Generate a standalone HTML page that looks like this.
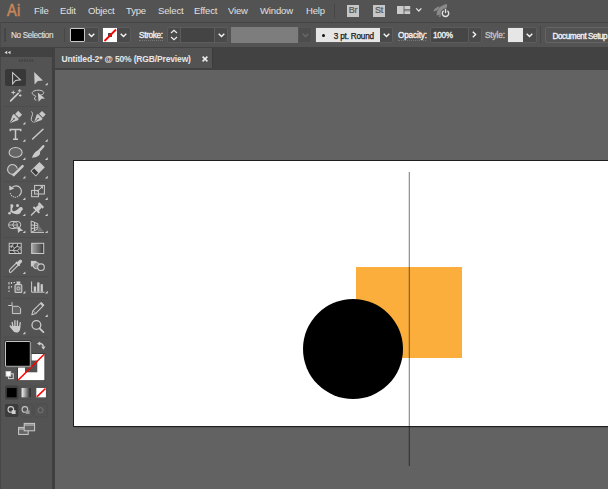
<!DOCTYPE html>
<html><head><meta charset="utf-8">
<style>
*{margin:0;padding:0;box-sizing:border-box}
html,body{width:608px;height:489px;overflow:hidden;background:#626262;font-family:"Liberation Sans",sans-serif;}
body>div,body>svg,.a{position:absolute}
#menubar{left:0;top:0;width:608px;height:22px;background:#535353}
#ctrl{left:0;top:22px;width:608px;height:26px;background:#535353;border-top:1px solid #444;border-bottom:1px solid #424242;border-left:1px solid #4a4a4a}
#tabbar{left:53px;top:48px;width:555px;height:22px;background:#424242}
#tab{left:55px;top:48px;width:157px;height:20px;background:#535353}
#tools{left:0;top:48px;width:53px;height:441px;background:#535353;border-left:1px solid #474747}
#toolshead{left:0;top:48px;width:53px;height:9px;background:#424242}
#gutter{left:52px;top:48px;width:3px;height:441px;background:#3f3f3f}
#canvas{left:55px;top:70px;width:553px;height:419px;background:#626262}
#artboard{left:73px;top:160px;width:540px;height:267px;background:#fff;border:1px solid #1e1e1e;box-shadow:1px 1px 0 rgba(0,0,0,0.12)}
.m{top:5px;font-size:9.5px;line-height:12px;color:#e0e0e0;letter-spacing:-0.15px;white-space:nowrap}
.c{top:30px;font-size:8.2px;line-height:12px;color:#f0f0f0;letter-spacing:-0.3px;white-space:nowrap;-webkit-text-stroke:0.35px #f0f0f0}
.u{border-bottom:1px dotted #aaa}
.box{border:1px solid #5c5c5c;border-radius:2px;background:#4a4a4a}
.sep{width:1px;background:#474747}
</style></head><body>
<div id="menubar"></div>
<div id="ctrl"></div>
<div id="tools"></div>
<div id="toolshead"></div>
<div id="gutter"></div>
<div id="tabbar"></div>
<div id="tab"></div>
<div style="left:212px;top:48px;width:1px;height:20px;background:#3c3c3c"></div>
<div id="canvas"></div>
<div id="artboard"></div>
<div style="left:356px;top:267px;width:106px;height:91px;background:#fbae3b"></div>
<div style="left:303px;top:299px;width:100px;height:100px;border-radius:50%;background:#000"></div>
<div style="left:408px;top:172px;width:1px;height:294px;background:rgba(0,0,0,0.12)"></div><div style="left:409px;top:172px;width:1px;height:294px;background:rgba(0,0,0,0.42)"></div>

<!-- menu -->
<div style="left:6.5px;top:-0.5px;font-size:16.5px;line-height:20px;color:#c98658;letter-spacing:0.4px;-webkit-text-stroke:0.55px #c98658;transform:scaleX(0.88);transform-origin:0 0">Ai</div>
<div class="m" style="left:34px">File</div>
<div class="m" style="left:60px">Edit</div>
<div class="m" style="left:88px">Object</div>
<div class="m" style="left:126px">Type</div>
<div class="m" style="left:158px">Select</div>
<div class="m" style="left:194px">Effect</div>
<div class="m" style="left:228px">View</div>
<div class="m" style="left:260px">Window</div>
<div class="m" style="left:306px">Help</div>
<div class="sep" style="left:334px;top:4px;height:14px;background:#464646"></div>
<div style="left:347px;top:5px;width:12px;height:12px;background:#c6c6c6"></div>
<div style="left:348.8px;top:4.5px;font-size:9px;line-height:11px;color:#555;letter-spacing:-0.2px;-webkit-text-stroke:0.2px #555">Br</div>
<div style="left:373px;top:5px;width:12px;height:12px;background:#c6c6c6"></div>
<div style="left:375px;top:4.5px;font-size:9px;line-height:11px;color:#555;letter-spacing:-0.2px;-webkit-text-stroke:0.2px #555">St</div>
<svg style="left:390px;top:0" width="66" height="22">
<rect x="7" y="6" width="6.6" height="8" fill="#cbcbcb"/>
<rect x="14.4" y="6" width="5.8" height="3.2" fill="#cbcbcb"/>
<rect x="14.4" y="9.6" width="5.8" height="1.3" fill="#9a9a9a"/>
<rect x="14.4" y="11.2" width="5.8" height="2.8" fill="#cbcbcb"/>
<path d="M26.2 8.4 L28.8 11 L31.4 8.4" fill="none" stroke="#e0e0e0" stroke-width="1.3"/>
<path d="M46.6 15.4 C46.2 10 50.5 5 57 4 C57.6 10 52.6 14.6 46.6 15.4 Z" fill="#8a8a8a"/>
<path d="M43.4 11.6 C43.8 9 46.4 6.8 49.6 6.4 C49.2 9 46.8 11 43.4 11.6 Z" fill="#8a8a8a"/>
<path d="M49.6 17 L50.6 13.4" stroke="#8a8a8a" stroke-width="1.3"/>
<circle cx="55.5" cy="13.4" r="4.9" fill="#535353"/>
<path d="M53.6 10.8 A3.2 3.2 0 1 0 57.4 10.8" fill="none" stroke="#e2e2e2" stroke-width="1.4"/>
<path d="M55.5 9 V13.2" stroke="#e2e2e2" stroke-width="1.3"/>
</svg>
<!-- control bar -->
<div style="left:4px;top:28px;width:2px;height:14px;background:repeating-linear-gradient(#424242 0 1px,#4a4a4a 1px 2px)"></div>
<div class="c" style="left:11px;top:29.5px;letter-spacing:-0.35px;color:#e2e2e2;-webkit-text-stroke:0.1px #e2e2e2">No Selection</div>
<div class="sep" style="left:64px;top:28px;height:14px"></div>
<div class="box" style="left:69px;top:27px;width:30px;height:16px"></div>
<div style="left:70px;top:28px;width:15px;height:14px;border:1px solid #c8c8c8;border-radius:1px;background:#000"></div>
<svg style="left:88px;top:33px" width="7" height="5"><path d="M0.7 0.8 L3.5 3.6 L6.3 0.8" fill="none" stroke="#f2f2f2" stroke-width="1.4"/></svg>
<div class="box" style="left:102px;top:27px;width:29px;height:16px"></div>
<div style="left:103px;top:28px;width:14px;height:14px;background:#fff"></div>
<div style="left:108px;top:33px;width:4px;height:4px;background:#4a4a4a"></div>
<svg style="left:103px;top:28px" width="14" height="14"><path d="M1.5 13 L13 1.5" stroke="#ff0000" stroke-width="1.8"/></svg>
<svg style="left:120px;top:33px" width="7" height="5"><path d="M0.7 0.8 L3.5 3.6 L6.3 0.8" fill="none" stroke="#f2f2f2" stroke-width="1.4"/></svg>
<div class="c" style="left:139px">Stroke:</div>
<div style="left:139px;top:40px;width:24px;height:1px;border-top:1px dotted #777"></div>
<div class="box" style="left:167px;top:27px;width:61px;height:16px"></div>
<div style="left:180px;top:28px;width:1px;height:14px;background:#5c5c5c"></div>
<div style="left:181px;top:28px;width:33px;height:14px;background:#444"></div>
<div style="left:214px;top:28px;width:1px;height:14px;background:#5c5c5c"></div>
<svg style="left:170px;top:29px" width="8" height="12"><path d="M1 4 L4 1.2 L7 4 M1 8 L4 10.8 L7 8" fill="none" stroke="#eee" stroke-width="1.2"/></svg>
<svg style="left:218px;top:33px" width="7" height="5"><path d="M0.7 0.8 L3.5 3.6 L6.3 0.8" fill="none" stroke="#f2f2f2" stroke-width="1.4"/></svg>
<div style="left:231px;top:27px;width:67px;height:16px;background:#7d7d7d"></div>
<div class="box" style="left:298px;top:27px;width:14px;height:16px;background:#4d4d4d;border-color:#555"></div>
<svg style="left:302px;top:33px" width="7" height="5"><path d="M0.7 0.8 L3.5 3.6 L6.3 0.8" fill="none" stroke="#6a6a6a" stroke-width="1.3"/></svg>
<div class="box" style="left:315px;top:27px;width:78px;height:16px"></div>
<div style="left:316px;top:28px;width:64px;height:14px;background:#e6e6e6"></div>
<div style="left:322px;top:33.5px;width:3px;height:3px;border-radius:50%;background:#111"></div>
<div class="c" style="left:333.8px;top:30.5px;color:#1a1a1a;letter-spacing:-0.2px;-webkit-text-stroke:0.25px #1a1a1a">3 pt. Round</div>
<svg style="left:383px;top:33px" width="7" height="5"><path d="M0.7 0.8 L3.5 3.6 L6.3 0.8" fill="none" stroke="#f2f2f2" stroke-width="1.4"/></svg>
<div class="c" style="left:398px;letter-spacing:-0.15px">Opacity:</div>
<div style="left:398px;top:40px;width:28px;height:1px;border-top:1px dotted #777"></div>
<div class="box" style="left:430px;top:27px;width:39px;height:16px;background:#464646"></div>
<div class="c" style="left:433px">100%</div>
<div class="box" style="left:468px;top:27px;width:14px;height:16px"></div>
<svg style="left:472px;top:31px" width="5" height="8"><path d="M0.8 0.7 L3.6 3.5 L0.8 6.3" fill="none" stroke="#f2f2f2" stroke-width="1.4"/></svg>
<div class="c" style="left:485px;color:#c8c8c8;letter-spacing:-0.1px;-webkit-text-stroke:0.3px #c8c8c8">Style:</div>
<div class="box" style="left:507px;top:27px;width:30px;height:16px"></div>
<div style="left:508px;top:28px;width:15px;height:14px;background:#e6e6e6"></div>
<svg style="left:526px;top:33px" width="7" height="5"><path d="M0.7 0.8 L3.5 3.6 L6.3 0.8" fill="none" stroke="#f2f2f2" stroke-width="1.4"/></svg>
<div class="sep" style="left:540px;top:26px;height:18px"></div>
<div class="box" style="left:545px;top:27px;width:80px;height:16px;background:#535353;border-color:#646464"></div>
<div class="c" style="left:552.5px;top:30.5px;color:#f2f2f2;letter-spacing:-0.45px">Document Setup</div>

<!-- tools -->
<svg style="left:0;top:0" width="53" height="489" viewBox="0 0 53 489">
<defs>
<linearGradient id="gr1" x1="0" x2="1" y1="0" y2="0"><stop offset="0" stop-color="#a8a8a8"/><stop offset="1" stop-color="#3a3a3a"/></linearGradient>
<linearGradient id="gr2" x1="0" x2="1" y1="0" y2="0"><stop offset="0" stop-color="#f4f4f4"/><stop offset="1" stop-color="#222"/></linearGradient>
<g id="tri"><path d="M0.2 2.9 L2.9 0.2 L2.9 2.9 Z" fill="#d0d0d0"/></g>
<g id="nib">
<path d="M0 7.8 L-4 -0.5 L-3.6 -2.2 L3.6 -2.2 L4 -0.5 Z" fill="#c8c8c8"/>
<path d="M0 7.2 L0 1.8" stroke="#535353" stroke-width="0.9"/>
<circle cx="0" cy="1.3" r="0.9" fill="#535353"/>
<rect x="-2.9" y="-7.8" width="5.8" height="4.6" fill="#c8c8c8"/>
</g>
</defs>
<!-- header arrows -->
<path d="M4.5 52.5 L7.2 50.7 L7.2 54.3 Z M7.8 52.5 L10.5 50.7 L10.5 54.3 Z" fill="#d8d8d8"/>
<path d="M19 60.5 H34" stroke="#444" stroke-width="2.5" stroke-dasharray="1.6 0.9"/>
<!-- row1 -->
<rect x="5" y="69" width="21" height="17" rx="2" fill="#383838"/>
<path d="M12.6 72.6 L20.4 79.8 L15.6 80.4 L12.6 83.8 Z" fill="none" stroke="#cacaca" stroke-width="1.05" stroke-linejoin="miter"/>
<path d="M34.2 72 L42.9 80.5 L37.8 81 L34.6 84.6 Z" fill="#cacaca"/>
<use href="#tri" x="44.8" y="82.3"/>
<!-- row2 wand -->
<path d="M10.6 100.8 L18.2 93.4" stroke="#cacaca" stroke-width="1.7" stroke-linecap="round"/>
<path d="M13.3 90.6 V94.4 M11.4 92.5 H15.2 M19.7 89 V92.6 M17.9 90.8 H21.5 M20.2 94.2 V96.8 M18.9 95.5 H21.5" stroke="#cacaca" stroke-width="1"/>
<!-- lasso -->
<path d="M40.5 95 C44.5 94.5 45 91.5 41 90.5 C37 89.6 32 90.8 32.2 93.3 C32.4 95 35 95.3 35.6 96 C36.2 97 34 97.5 34.5 99 C35 100.3 36.5 100 36.5 100" fill="none" stroke="#cacaca" stroke-width="1"/>
<path d="M37.8 92.4 L45 98.6 L41.6 98.8 L38.6 101.8 Z" fill="#cacaca"/>
<!-- sep -->
<path d="M3 106.5 H49" stroke="#4d4d4d" stroke-width="1"/>
<!-- row3 pen -->
<use href="#nib" transform="translate(14.9 118) rotate(45) scale(0.95)"/>
<use href="#tri" x="22.5" y="121.5"/>
<use href="#nib" transform="translate(38.9 117.7) rotate(45) scale(0.9)"/>
<path d="M31.3 111.6 C33.5 112.9 32.2 115.4 31.4 117.9 C30.8 120 32 121.8 33.5 122.2" fill="none" stroke="#cacaca" stroke-width="1"/>
<!-- row4 T / line -->
<path d="M10.3 131.2 V129.4 H20.7 V131.2 M15.5 129.4 V139 M13 139.2 H18" fill="none" stroke="#cacaca" stroke-width="1.5"/>
<use href="#tri" x="22.5" y="138.8"/>
<path d="M32.6 139 L43 129.3" stroke="#cacaca" stroke-width="1.5" stroke-linecap="round"/>
<use href="#tri" x="44.8" y="138.8"/>
<!-- row5 ellipse / brush -->
<ellipse cx="15.6" cy="152.4" rx="6.5" ry="4.9" fill="#666" stroke="#cacaca" stroke-width="1.1"/>
<use href="#tri" x="22.5" y="157"/>
<path d="M43.3 146.2 L38.5 151.6" stroke="#cacaca" stroke-width="2.4" stroke-linecap="round"/>
<path d="M38.6 150.2 C40.5 151.5 40.8 153.8 38.8 155.6 C37 157.2 34 157.8 31.8 157.8 C32.5 156 33.5 153.8 35.2 152.2 C36.2 151.2 37.5 150.4 38.6 150.2 Z" fill="#cacaca"/>
<use href="#tri" x="44.8" y="157"/>
<!-- row6 shaper / eraser -->
<path d="M15.5 173.3 A4.9 4.9 0 1 1 17.3 168.6" fill="#666" stroke="#cacaca" stroke-width="1.1"/>
<path d="M13.6 175.2 L22.6 166.2" stroke="#cacaca" stroke-width="2.5" stroke-linecap="round"/>
<use href="#tri" x="22.5" y="175.6"/>
<g transform="translate(37.6 169.2) rotate(45)">
<rect x="-3.8" y="-6.4" width="7.6" height="12.8" fill="#cacaca"/>
<rect x="-2.9" y="2" width="5.8" height="3.5" fill="#3a3a3a"/>
</g>
<use href="#tri" x="44.8" y="175.6"/>
<!-- sep -->
<path d="M3 181.5 H49" stroke="#4d4d4d" stroke-width="1"/>
<!-- row7 rotate / scale -->
<path d="M12.4 187.2 A5.3 5.3 0 0 1 19.6 195.2" fill="none" stroke="#cacaca" stroke-width="1.2"/>
<path d="M19.6 195.2 A5.3 5.3 0 0 1 10.3 193.2" fill="none" stroke="#cacaca" stroke-width="1.1" stroke-dasharray="1.2 0.9"/>
<path d="M9.2 185.4 L9.4 190.4 L14.2 188.6 Z" fill="#cacaca"/>
<use href="#tri" x="22.5" y="197"/>
<rect x="31.6" y="190.4" width="6.8" height="6.3" fill="none" stroke="#cacaca" stroke-width="1"/>
<rect x="34.6" y="185.4" width="9.8" height="8.6" fill="none" stroke="#cacaca" stroke-width="1"/>
<path d="M36.5 192 L42.4 186.8" stroke="#cacaca" stroke-width="1"/>
<path d="M43.2 185.9 L40 186.5 L42.6 189.1 Z" fill="#cacaca"/>
<use href="#tri" x="44.8" y="197"/>
<!-- row8 puppet / pin -->
<path d="M10.5 204.5 C13 203.5 14 205 13 207 C12 209 11.5 210 12.5 210.8 C14 212 17 210 19 208 C20.5 206.5 22.5 207 22.8 208.8 C23 210 22 211 21 211 C21.5 212.5 19.5 214.5 16.5 214.2 C13.5 214 11.5 212.5 10.5 211.5 Z" fill="#cacaca"/>
<circle cx="17.5" cy="205.5" r="1.5" fill="#cacaca"/>
<circle cx="13.5" cy="209.6" r="1.1" fill="#535353"/>
<path d="M9.8 212.6 L12.6 210" stroke="#cacaca" stroke-width="1"/>
<circle cx="9.5" cy="213.2" r="1.3" fill="#cacaca"/>
<use href="#tri" x="22.5" y="213.2"/>
<g transform="translate(37.2 209.2) rotate(45)">
<rect x="-4.2" y="0.2" width="8.4" height="1.8" fill="#cacaca"/>
<path d="M-2.4 0.4 L-2 -4.2 L2 -4.2 L2.4 0.4 Z" fill="#cacaca"/>
<rect x="-3.3" y="-6.4" width="6.6" height="2.4" fill="#cacaca"/>
</g>
<path d="M36.2 210.2 L31.4 215" stroke="#cacaca" stroke-width="1.3" stroke-linecap="round"/>
<use href="#tri" x="44.8" y="213.2"/>
<!-- row9 shape builder / perspective -->
<ellipse cx="13" cy="225" rx="4.3" ry="3.6" fill="none" stroke="#cacaca" stroke-width="1"/>
<ellipse cx="16.8" cy="224.8" rx="4" ry="3.5" fill="none" stroke="#cacaca" stroke-width="1"/>
<path d="M8.8 225 H17" stroke="#cacaca" stroke-width="0.8"/>
<path d="M17.4 225.8 L23.2 230.8 L20.2 231 L18 233 Z" fill="#cacaca"/>
<use href="#tri" x="22.5" y="230.2"/>
<path d="M31.2 221 V232.4 H44 M31.2 221 L37.8 223.8 M31.2 232.4 L37.8 229 M34.5 222.4 V230.8 M37.8 223.8 V229 M31.2 225 L37.8 225.5 M31.2 228.6 L37.8 227.4" fill="none" stroke="#cacaca" stroke-width="1"/>
<path d="M37.8 224 L43.5 231.5 H37.8 Z" fill="#777"/>
<use href="#tri" x="44.8" y="230.2"/>
<!-- sep -->
<path d="M3 237.5 H49" stroke="#4d4d4d" stroke-width="1"/>
<!-- row10 mesh / gradient -->
<rect x="9.2" y="243.3" width="12" height="10.2" fill="#3e3e3e" stroke="#cacaca" stroke-width="1"/>
<path d="M9.5 246.5 L12 245.8 L13.5 243.5 M12 245.8 L14.5 248 L17 246.5 L17.8 243.5 M17 246.5 L20.8 247.5 M14.5 248 L13.2 250.5 L9.5 250.2 M13.2 250.5 L15.5 253.2 M13.2 250.5 L17.5 250.8 L18.8 248.8 L20.8 249.2 M17.5 250.8 L19.5 253.2 M11 248 L12 245.8" fill="none" stroke="#cacaca" stroke-width="0.95"/>
<rect x="31.7" y="243.3" width="12" height="10.2" fill="url(#gr1)" stroke="#cacaca" stroke-width="1"/>
<!-- row11 eyedropper / blend -->
<g transform="translate(0 1)">
<path d="M10.2 271.6 C9 270.5 9.2 269.2 10.2 268.2 L17 261.4 L19 263.4 L12.2 270.2 C11.2 271.2 10.8 271.8 10.2 271.6 Z" fill="none" stroke="#cacaca" stroke-width="1.1"/>
<path d="M16.8 262.4 L19.6 259.6 C20.8 258.6 22.2 260 21.2 261.2 L18.4 264 Z M16 261 L19.8 264.8" fill="#cacaca" stroke="#cacaca" stroke-width="1.2"/>
</g>
<use href="#tri" x="22.5" y="271.2"/>
<rect x="30.9" y="260.9" width="5.6" height="5.6" fill="#cacaca"/>
<circle cx="36.4" cy="265.6" r="3.2" fill="#8a8a8a" stroke="#cacaca" stroke-width="1"/>
<circle cx="41" cy="267.2" r="3.3" fill="#535353" stroke="#cacaca" stroke-width="1.1"/>
<!-- sep -->
<path d="M3 276.7 H49" stroke="#4d4d4d" stroke-width="1"/>
<!-- row12 symbol sprayer / graph -->
<path d="M9 282 V284.5 M9 286 V289 M9 290.5 V292 M11.5 282 V284 M11.5 286 V287.5 M13.5 282.5 H15" stroke="#cacaca" stroke-width="1.1"/>
<rect x="15" y="284.5" width="6.8" height="8" rx="1" fill="#777" stroke="#cacaca" stroke-width="1.1"/>
<rect x="16.5" y="281.5" width="3.8" height="2.4" fill="#cacaca"/>
<circle cx="18.4" cy="288.5" r="1.4" fill="none" stroke="#cacaca" stroke-width="0.9"/>
<use href="#tri" x="22.5" y="290.5"/>
<path d="M31.6 281.5 V292.2 H44.5" fill="none" stroke="#cacaca" stroke-width="1"/>
<rect x="33.8" y="286.5" width="2.3" height="5.2" fill="#cacaca"/>
<rect x="37.2" y="282.4" width="2.3" height="9.3" fill="#cacaca"/>
<rect x="40.6" y="284.2" width="2.3" height="7.5" fill="#cacaca"/>
<use href="#tri" x="44.8" y="290.5"/>
<!-- sep -->
<path d="M3 298.4 H49" stroke="#4d4d4d" stroke-width="1"/>
<!-- row13 artboard / pencil -->
<path d="M8.2 305.5 H12 M12 302.2 V306" stroke="#cacaca" stroke-width="1"/>
<path d="M12.4 306.3 H18.5 L20.6 308.4 V313.6 H12.4 Z" fill="#666" stroke="#cacaca" stroke-width="1"/>
<path d="M31.8 314.8 L33 310.6 L41.2 302.6 L43.8 305.2 L35.8 313.4 Z" fill="none" stroke="#cacaca" stroke-width="1.05" stroke-linejoin="round"/>
<path d="M40 303.8 L42.6 306.4 L43.8 305.2 L41.2 302.6 Z" fill="#cacaca"/>
<path d="M33 310.6 L35.8 313.4" stroke="#cacaca" stroke-width="0.8"/>
<use href="#tri" x="44.8" y="314"/>
<!-- row14 hand / zoom -->
<path d="M12.2 322.4 L12.9 327 M14.9 320.6 V326.4 M17.4 320.8 V326.4 M20.2 322.6 L19.6 327.4" stroke="#cacaca" stroke-width="1.35" stroke-linecap="round"/>
<path d="M12 326 H20.2 V328.4 C20.2 331 18.6 332.6 16.2 332.6 C14.6 332.6 13.6 331.8 12.8 330.6 L9.8 326.8 C9.2 325.8 10.1 324.9 11 325.5 L12 326.4 Z" fill="#cacaca"/>
<use href="#tri" x="22.5" y="331.4"/>
<circle cx="36.4" cy="325" r="4.4" fill="none" stroke="#cacaca" stroke-width="1.3"/>
<path d="M39.6 328.3 L43.4 332.1" stroke="#cacaca" stroke-width="1.8" stroke-linecap="round"/>
<!-- sep -->
<path d="M3 337.2 H49" stroke="#4d4d4d" stroke-width="1"/>
<!-- fill / stroke -->
<rect x="17.2" y="353.2" width="28" height="27.8" fill="#3a3a3a"/>
<rect x="18" y="354" width="26.4" height="26.2" fill="#fff"/>
<rect x="25" y="360.5" width="12.3" height="11.8" fill="#535353"/>
<path d="M18.3 380 L44.2 354.2" stroke="#ff0000" stroke-width="1.5"/>
<rect x="4" y="340" width="27.6" height="27.6" rx="2" fill="#3a3a3a"/>
<rect x="5" y="341" width="25.8" height="25.8" rx="1.5" fill="#c4c4c4"/>
<path d="M30.8 342 V366.8 H6" fill="none" stroke="#8e8e8e" stroke-width="1"/>
<rect x="6" y="342" width="23.8" height="23.8" fill="#000"/>
<path d="M39.2 343.6 C41 343.4 43 344.6 43.4 346.6" fill="none" stroke="#cacaca" stroke-width="1.4"/>
<path d="M37 343.6 L40.2 341.4 L40.2 345.8 Z M41.2 346.6 L45.6 346.6 L43.4 349.8 Z" fill="#cacaca"/>
<rect x="8.5" y="373.8" width="4.8" height="4.8" fill="none" stroke="#cacaca" stroke-width="1.1"/>
<rect x="6" y="371.4" width="4.8" height="4.8" fill="#fff" stroke="#cacaca" stroke-width="0.8"/>
<!-- mode buttons -->
<rect x="5" y="385.5" width="13.4" height="14" rx="1.5" fill="#3f3f3f"/>
<rect x="6.8" y="388" width="9.8" height="9.3" fill="#000"/>
<rect x="20.4" y="385.5" width="12" height="14" rx="1.5" fill="none" stroke="#4c4c4c" stroke-width="0.8"/>
<rect x="21.6" y="388" width="9.1" height="9.3" fill="url(#gr2)"/>
<rect x="34.4" y="385.5" width="12.8" height="14" rx="1.5" fill="none" stroke="#4c4c4c" stroke-width="0.8"/>
<rect x="36.3" y="388" width="9.6" height="9.3" fill="#fff"/>
<path d="M36.8 396.8 L45.5 388.5" stroke="#ff0000" stroke-width="1.6"/>
<rect x="5" y="404" width="13.4" height="13" rx="1.5" fill="#3c3c3c"/>
<rect x="20.4" y="404" width="12" height="13" rx="1.5" fill="none" stroke="#4c4c4c" stroke-width="0.8"/>
<rect x="34.4" y="404" width="12.8" height="13" rx="1.5" fill="none" stroke="#4c4c4c" stroke-width="0.8"/>
<circle cx="10.8" cy="409.4" r="2.8" fill="none" stroke="#d0d0d0" stroke-width="1.1"/>
<rect x="11.8" y="410.2" width="3.8" height="3.8" fill="#d0d0d0"/>
<circle cx="24.9" cy="409.4" r="2.8" fill="none" stroke="#c4c4c4" stroke-width="1.1"/>
<rect x="26" y="410.4" width="3.6" height="3.6" fill="#9a9a9a"/>
<circle cx="40.6" cy="410.2" r="2.6" fill="none" stroke="#767676" stroke-width="1"/>
<!-- screen mode -->
<rect x="18.6" y="427.4" width="9.6" height="7" fill="#666" stroke="#cacaca" stroke-width="1"/>
<rect x="24.2" y="423.4" width="10.4" height="7.4" fill="#666" stroke="#cacaca" stroke-width="1"/>
<path d="M18.6 429 H24 M24.2 425 H34.6" stroke="#cacaca" stroke-width="1"/>
</svg>
<!-- tab -->
<div style="left:61.5px;top:52px;font-size:8.5px;font-weight:bold;line-height:14px;color:#e6e6e6;letter-spacing:-0.15px;white-space:nowrap">Untitled-2* @ 50% (RGB/Preview)</div>
<svg style="left:200px;top:54px" width="10" height="10"><path d="M2.6 2.6 L7.4 7.4 M7.4 2.6 L2.6 7.4" stroke="#ececec" stroke-width="1.6"/></svg>
</body></html>
